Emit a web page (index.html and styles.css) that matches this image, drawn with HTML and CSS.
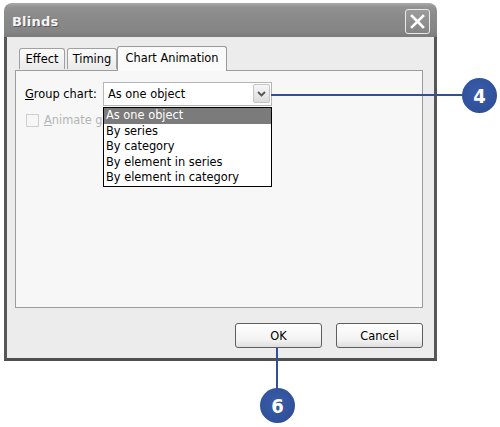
FILE: index.html
```html
<!DOCTYPE html>
<html>
<head>
<meta charset="utf-8">
<link rel="stylesheet" href="styles.css">
</head>
<body>
<div class="stage">
  <div class="dialog">
    <div class="titlebar">
      <span class="title">Blinds</span>
      <span class="close">
        <svg width="15" height="15" viewBox="0 0 15 15"><path d="M2 2 L13 13 M13 2 L2 13" stroke="#fff" stroke-width="2.6" stroke-linecap="square" fill="none"/></svg>
      </span>
    </div>
    <div class="frame">
      <div class="tabs">
        <div class="tab tab-effect">Effect</div>
        <div class="tab tab-timing">Timing</div>
        <div class="tab tab-active">Chart Animation</div>
      </div>
      <div class="panel">
        <div class="row">
          <span class="label"><u>G</u>roup chart:</span>
          <div class="combo">
            <span class="combo-value">As one object</span>
            <span class="combo-btn">
              <svg width="9" height="6" viewBox="0 0 9 6"><path d="M1 1 L4.5 4.5 L8 1" stroke="#555" stroke-width="1.8" fill="none"/></svg>
            </span>
            <ul class="list">
              <li class="selected">As one object</li>
              <li>By series</li>
              <li>By category</li>
              <li>By element in series</li>
              <li>By element in category</li>
            </ul>
          </div>
        </div>
        <div class="check-row">
          <span class="checkbox"></span>
          <span class="check-label"><u>A</u>nimate grid and legend</span>
        </div>
      </div>
      <div class="buttons">
        <span class="btn">OK</span>
        <span class="btn">Cancel</span>
      </div>
    </div>
  </div>
  <div class="line line-4"></div>
  <div class="badge badge-4">4</div>
  <div class="line line-6"></div>
  <div class="badge badge-6">6</div>
</div>
</body>
</html>
```
FILE: styles.css
```css
html, body {
  margin: 0;
  padding: 0;
  background: #ffffff;
}
.stage {
  position: relative;
  width: 500px;
  height: 427px;
  overflow: hidden;
  font-family: "DejaVu Sans", "Liberation Sans", sans-serif;
  font-size: 11.4px;
  color: #000;
}
.dialog {
  margin: 3px 0 0 4px;
  width: 433px;
  display: flex;
  flex-direction: column;
}
.titlebar {
  height: 34px;
  box-sizing: border-box;
  border-radius: 8px 8px 0 0;
  background: linear-gradient(#a9a9a9 0px, #929292 4px, #8a8a8a 14px, #858585 28px, #7c7c7c 34px);
  display: flex;
  align-items: center;
  justify-content: space-between;
  padding: 3px 7px 0 8px;
}
.title {
  font-weight: bold;
  font-size: 13px;
  color: #f4f4f4;
  text-shadow: 1px 1px 0 #5a5a5a;
  letter-spacing: 0.2px;
}
.close {
  width: 25px;
  height: 25px;
  box-sizing: border-box;
  border: 1px solid #e8e8e8;
  border-radius: 3px;
  background: linear-gradient(#9c9c9c, #858585);
  display: flex;
  align-items: center;
  justify-content: center;
}
.frame {
  box-sizing: border-box;
  height: 324px;
  background: #ececec;
  border-left: 3px solid #575757;
  border-right: 3px solid #575757;
  border-bottom: 3px solid #4f4f4f;
  padding: 10px 11px 10px 8px;
  display: flex;
  flex-direction: column;
}
.tabs {
  display: flex;
  align-items: flex-end;
  height: 23px;
  padding-left: 4px;
  position: relative;
  z-index: 1;
}
.tab {
  box-sizing: border-box;
  height: 21px;
  border: 1px solid #a0a0a0;
  border-bottom: none;
  border-radius: 3px 3px 0 0;
  background: linear-gradient(#fbfbfb, #ebebeb);
  display: flex;
  align-items: center;
  justify-content: center;
  margin-bottom: 1px;
}
.tab-effect {
  width: 46px;
}
.tab-timing {
  width: 50px;
  margin-left: 2px;
}
.tab-active {
  width: 110px;
  height: 25px;
  margin-bottom: -1px;
  background: #fafafa;
  border-color: #9a9a9a;
  padding-bottom: 2px;
}
.panel {
  box-sizing: border-box;
  height: 238px;
  background: #f7f7f7;
  border: 1px solid #9c9c9c;
  padding: 11px 9px;
}
.row {
  display: flex;
  align-items: center;
}
.label {
  width: 78px;
}
.combo {
  position: relative;
  box-sizing: border-box;
  width: 169px;
  height: 24px;
  border: 1px solid #b5b5b5;
  background: #ffffff;
  display: flex;
  align-items: center;
  padding-left: 4px;
}
.combo-value {
  flex: 1;
}
.combo-btn {
  position: absolute;
  top: 1px;
  right: 1px;
  width: 17px;
  height: 19px;
  box-sizing: border-box;
  border: 1px solid #c4c4c4;
  border-radius: 2px;
  background: linear-gradient(#f6f6f6, #dcdcdc);
  display: flex;
  align-items: center;
  justify-content: center;
}
.list {
  position: absolute;
  left: -1px;
  top: 24px;
  width: 169px;
  box-sizing: border-box;
  margin: 0;
  padding: 0;
  list-style: none;
  background: #ffffff;
  border: 1px solid #000;
  z-index: 2;
}
.list li {
  height: 15.5px;
  line-height: 15.5px;
  padding-left: 2px;
  white-space: nowrap;
}
.list li.selected {
  background: #7b7b7b;
  color: #ffffff;
}
.check-row {
  display: flex;
  align-items: center;
  margin-top: 7px;
  margin-left: 1px;
  color: #b4b4b4;
}
.checkbox {
  width: 13px;
  height: 13px;
  box-sizing: border-box;
  border: 1px solid #cfcfcf;
  background: #f6f6f6;
  margin-right: 5px;
}
.check-label {
  width: 58px;
  overflow: hidden;
  white-space: nowrap;
}
.buttons {
  display: flex;
  justify-content: flex-end;
  gap: 14px;
  margin-top: 15px;
}
.btn {
  width: 87px;
  height: 25px;
  box-sizing: border-box;
  border: 1px solid #5e5e5e;
  border-radius: 3px;
  background: linear-gradient(#ffffff, #f2f2f2 70%, #dedede);
  display: flex;
  align-items: center;
  justify-content: center;
}
.line {
  position: absolute;
  background: #2f4f96;
}
.line-4 {
  left: 271px;
  top: 94px;
  width: 193px;
  height: 2px;
}
.line-6 {
  left: 276px;
  top: 348px;
  width: 2px;
  height: 42px;
}
.badge {
  position: absolute;
  width: 35px;
  height: 35px;
  border-radius: 50%;
  background: radial-gradient(circle at 45% 40%, #3a5ca8, #2a4a93);
  color: #ffffff;
  font-family: "DejaVu Sans Condensed", "Liberation Sans Narrow", "DejaVu Sans", sans-serif;
  font-weight: bold;
  font-size: 20px;
  display: flex;
  align-items: center;
  justify-content: center;
}
.badge-4 {
  left: 462px;
  top: 78px;
}
.badge-6 {
  left: 260px;
  top: 388px;
}
```
